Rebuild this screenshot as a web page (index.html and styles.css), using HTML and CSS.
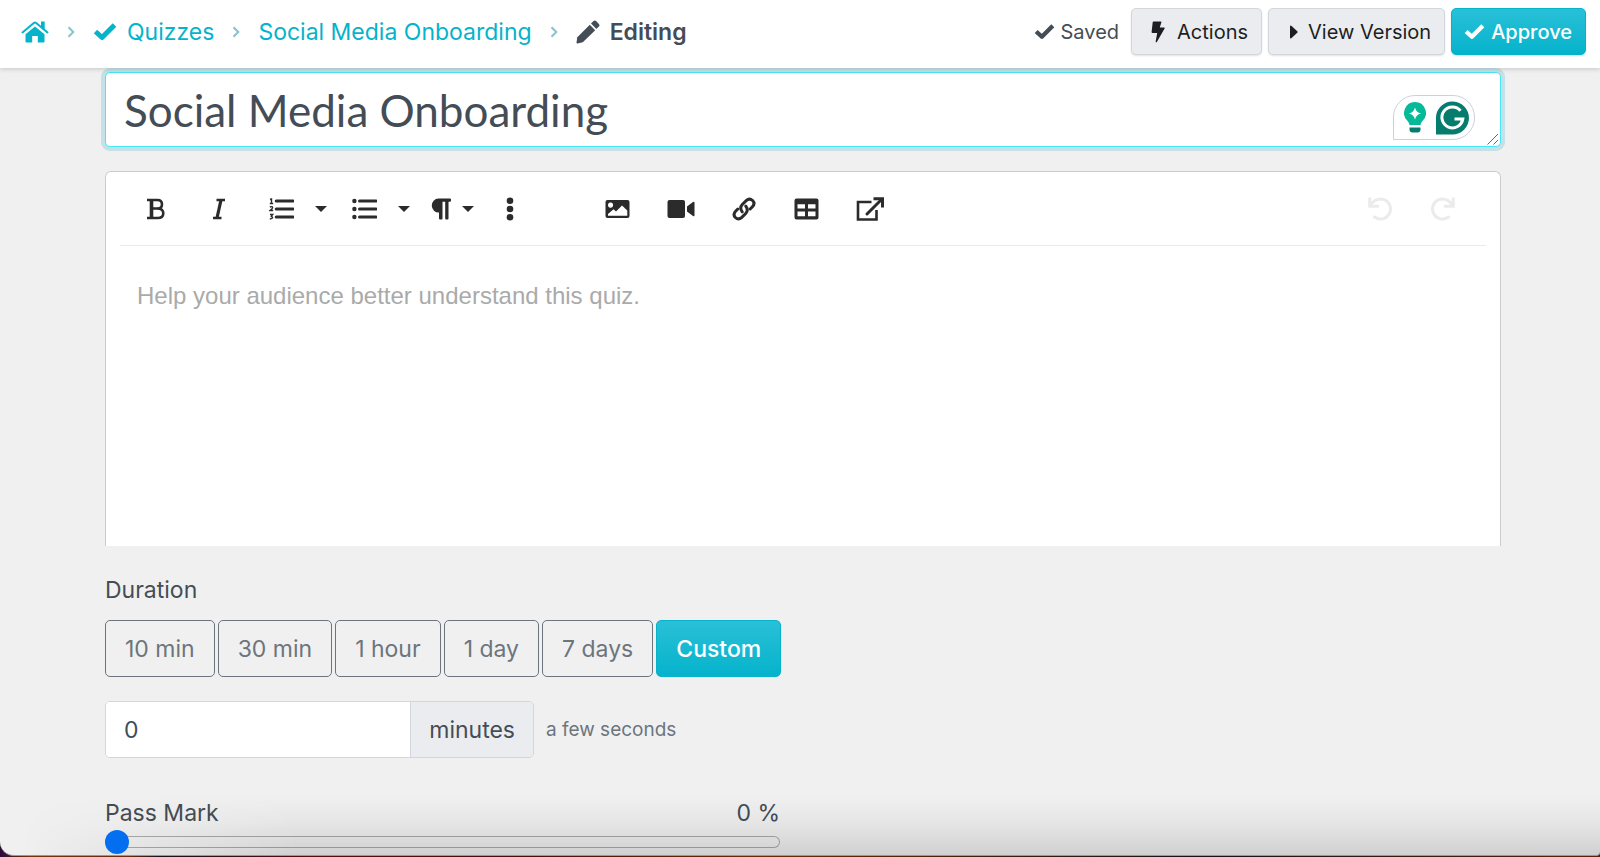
FILE: index.html
```html
<!DOCTYPE html>
<html lang="en">
<head>
  <meta charset="UTF-8" />
  <meta name="viewport" content="width=device-width, initial-scale=1" />
  <title>Social Media Onboarding - Editing</title>
  <link rel="stylesheet" href="styles.css">
</head>
<body>
  <div class="window">
    <header class="topbar">
      <nav class="breadcrumb" aria-label="Breadcrumb">
        <a href="#" class="home" aria-label="Home">
          <svg width="28" height="22" viewBox="0 0 28 22"><path d="M14 5.4 4.5 13.2V20.500q0 1 1 1h5.700v-6.500h5.600v6.500h5.700q1 0 1-1V13.200z" /><path class="line" d="M1.500 11.400 12.800 2q1.200-1 2.400 0L26.500 11.400" stroke-width="2" stroke-linecap="round" /><path d="M20 .5h3.700v8.500L20 6z" /></svg>
        </a>
        <svg class="line sep" width="8" height="12" viewBox="0 0 8 12"><path d="M1.500 1.200 6.300 6 1.500 10.800" /></svg>
        <a href="#">
          <svg class="line" width="24" height="19" viewBox="0 0 24 19"><path d="M2.500 9.500 9 15.500 21.500 3" stroke-width="5" stroke-linejoin="round" /></svg>
          Quizzes
        </a>
        <svg class="line sep" width="8" height="12" viewBox="0 0 8 12"><path d="M1.500 1.200 6.300 6 1.500 10.800" /></svg>
        <a href="#">Social Media Onboarding</a>
        <svg class="line sep" width="8" height="12" viewBox="0 0 8 12"><path d="M1.500 1.200 6.300 6 1.500 10.800" /></svg>
        <span class="current">
          <svg width="24" height="24" viewBox="0 0 24 24"><path d="M13.800 4.800 19.200 10.200 6.800 22.300 1.600 23.500Q.4 23.600.5 22.400L1.300 17.200z" /><path d="m15 3.600 2.500-2.500q1.300-1.200 2.600 0l2.800 2.800q1.200 1.300 0 2.600L20.400 9z" /></svg>
          Editing
        </span>
      </nav>
      <div class="actions">
        <span class="saved">
          <svg class="line" width="21" height="17" viewBox="0 0 24 19"><path d="M2.500 9.500 9 15.500 21.500 3" stroke-width="5" stroke-linejoin="round" /></svg>
          Saved
        </span>
        <button type="button" class="btn btn-light btn-actions">
          <svg width="14" height="22" viewBox="0 0 14 22"><path d="M2.500.5h7.300q.8 0 .6.800L8.800 6.600h4.300q1 0 .5.900L6 20.800q-1.400 1.500-1.300-.5L6.200 12H1.500Q.5 12 .6 11L1.700 1.300Q1.800.5 2.500.5z" /></svg>
          Actions
        </button>
        <button type="button" class="btn btn-light btn-version">
          <svg width="8" height="14" viewBox="0 0 8 14"><path d="M0 1.200Q.2 0 1.300.7L7.300 6.300Q8 7 7.300 7.700L1.300 13.300Q.2 14 0 12.800z" /></svg>
          View Version
        </button>
        <button type="button" class="btn btn-primary btn-approve">
          <svg class="line" width="21" height="17" viewBox="0 0 24 19"><path d="M2.500 9.500 9 15.500 21.500 3" stroke-width="5" stroke-linejoin="round" /></svg>
          Approve
        </button>
      </div>
    </header>

    <main class="content">
      <div class="title-field">
        <textarea class="title-input" rows="1" aria-label="Quiz title">Social Media Onboarding</textarea>
        <svg class="resize-grip" width="12" height="12" viewBox="0 0 12 12"><path d="M.5 11.500 11 1M6.500 11.500 11 7" /></svg>
        <div class="assistant">
          <svg width="22" height="31" viewBox="0 0 22 31"><path fill="#06b999" d="M11 0a11 11 0 0 1 7 19.400q-1.300 1.500-1.500 3.600h-11q-.2-2.100-1.500-3.600A11 11 0 0 1 11 0z" /><path fill="#fff" d="M11 5.500Q12.200 10.300 17 11.500 12.200 12.700 11 17.500 9.800 12.700 5 11.500 9.800 10.300 11 5.500z" /><path fill="#067c6e" d="M5.500 25.500h11v2q0 3-3 3h-5q-3 0-3-3z" /></svg>
          <svg width="33" height="35" viewBox="0 0 33 35"><path fill="#067c6e" d="M0 34.500V17A16.500 16.500 0 1 1 16.500 34.500z" /><path d="M24.500 10.700A10.500 10.500 0 1 0 26.800 19H18.500M26.800 19l-2 5" fill="none" stroke="#fff" stroke-width="3" /></svg>
        </div>
      </div>

      <section class="editor">
        <div class="toolbar">
          <button type="button" class="tool" aria-label="Bold">
            <svg class="line" width="20" height="22" viewBox="0 0 20 22"><path d="M1 2h10.500q4.500 0 4.500 4.300t-4.500 4.200H6M11 10.500q6.300 0 6.300 4.800T11.500 20H1" stroke-width="2.600" /><path d="M5.500 2v18" stroke-width="3.600" /></svg>
          </button>
          <button type="button" class="tool" aria-label="Italic">
            <svg class="line" width="14" height="22" viewBox="0 0 14 22"><path d="M4.500 2H13M1 20h8.500" stroke-width="2.400" /><path d="M9 2 5 20" stroke-width="3.200" /></svg>
          </button>
          <button type="button" class="tool" aria-label="Ordered list">
            <svg class="line" width="25" height="22" viewBox="0 0 25 22"><path d="M7.200 3H24M7.200 11H24M7.200 19H24" stroke-width="3" stroke-linecap="round" /><path d="M1 1.500 2.500 1v4.500M.8 5.500h3.400M.8 9q2.800-1 2.800.8 0 1-2.600 2.700h3.200M1 16.500h2.700L2.300 18.300q3.200 1.800-1.500 2.700" stroke-width="1.400" /></svg>
          </button>
          <button type="button" class="caret" aria-label="Ordered list styles"><svg width="12" height="6" viewBox="0 0 12 6"><path d="M0 0h12L6 6z" /></svg></button>
          <button type="button" class="tool" aria-label="Unordered list">
            <svg width="25" height="22" viewBox="0 0 25 22"><path d="M7.500 3H24M7.500 11H24M7.500 19H24" stroke="currentColor" stroke-width="3" stroke-linecap="round" /><circle cx="2.400" cy="3" r="2.200" /><circle cx="2.400" cy="11" r="2.200" /><circle cx="2.400" cy="19" r="2.200" /></svg>
          </button>
          <button type="button" class="caret" aria-label="Unordered list styles"><svg width="12" height="6" viewBox="0 0 12 6"><path d="M0 0h12L6 6z" /></svg></button>
          <button type="button" class="tool-format" aria-label="Paragraph format">
            <svg width="20" height="22" viewBox="0 0 20 22"><path d="M7.500.5H19q1 0 1 1v1.300q0 1-1 1h-1.500V20.500q0 1-1 1h-1.300q-1 0-1-1V3.800H11.500V20.500q0 1-1 1H9q-1 0-1-1V14.500A7 7 0 0 1 7.500.5z" /></svg>
            <svg width="12" height="6" viewBox="0 0 12 6"><path d="M0 0h12L6 6z" /></svg>
          </button>
          <button type="button" class="tool-more" aria-label="More text">
            <svg width="8" height="24" viewBox="0 0 8 24"><circle cx="4" cy="3.800" r="3.300" /><circle cx="4" cy="12" r="3.300" /><circle cx="4" cy="20.200" r="3.300" /></svg>
          </button>
          <button type="button" class="tool" aria-label="Insert image">
            <svg width="25" height="20" viewBox="0 0 25 20"><path fill-rule="evenodd" d="M2.500 1h20Q24.500 1 24.500 3v14q0 2-2 2h-20q-2 0-2-2V3q0-2 2-2zM5.500 3.500a2.600 2.600 0 1 0 .1 0zM3 16.800H22.300V11.500L17 6.500 11 12.500 8.500 10.200 3 15z" /></svg>
          </button>
          <button type="button" class="tool" aria-label="Insert video">
            <svg width="28" height="20" viewBox="0 0 28 20"><rect x=".5" y="1" width="17.500" height="18" rx="2" /><path d="M20 7.500 26 3q1.500-.8 1.500.8v12.400q0 1.600-1.500.8L20 12.500z" /></svg>
          </button>
          <button type="button" class="tool" aria-label="Insert link">
            <svg class="line" width="24" height="24" viewBox="0 0 24 24" stroke-width="3" stroke-linecap="round"><path d="M10.200 14.800Q7.200 10.700 10.300 7.500L14.200 3.600Q17.500.6 20.600 3.500 23.500 6.600 20.400 9.800L18.200 12" /><path d="M13.800 9.200Q16.800 13.300 13.700 16.500L9.800 20.400Q6.500 23.400 3.400 20.500.5 17.400 3.600 14.200L5.800 12" /></svg>
          </button>
          <button type="button" class="tool" aria-label="Insert table">
            <svg width="25" height="22" viewBox="0 0 25 22"><path fill-rule="evenodd" d="M2.500.5h20q2 0 2 2v17q0 2-2 2h-20q-2 0-2-2v-17q0-2 2-2zM3.500 6.200v4.300h7.500V6.200zM14 6.200v4.300h7.500V6.200zM3.500 13.500v4.800h7.500v-4.800zM14 13.500v4.800h7.500v-4.800z" /></svg>
          </button>
          <button type="button" class="tool" aria-label="Open in full view">
            <svg class="line" width="28" height="24" viewBox="0 0 28 24" stroke-width="3"><path d="M15.500 5H2v17.500h18.500V13" stroke-width="2.600" /><path d="M11 17 25.500 2.500" stroke-linecap="round" /><path d="M17.500 1.800h9v8.700" /></svg>
          </button>
          <div class="history">
            <button type="button" class="tool" disabled aria-label="Undo">
              <svg class="line" width="24" height="24" viewBox="0 0 24 24" stroke-width="3"><path d="M2.500 8.500Q6 2 13 2A10 10 0 1 1 6.500 20" stroke-linecap="round" /><path d="M1.700.5v8.700H11" /></svg>
            </button>
            <button type="button" class="tool" disabled aria-label="Redo">
              <svg class="line" width="24" height="24" viewBox="0 0 24 24" stroke-width="3"><path d="M21.500 8.500Q18 2 11 2A10 10 0 1 0 17.500 20" stroke-linecap="round" /><path d="M22.300.5v8.700H13" /></svg>
            </button>
          </div>
        </div>
        <textarea class="description" placeholder="Help your audience better understand this quiz." aria-label="Quiz description"></textarea>
      </section>

      <section class="settings">
        <span class="label" id="durationLabel">Duration</span>
        <div class="durations" role="group" aria-labelledby="durationLabel">
          <button type="button" class="duration">10 min</button>
          <button type="button" class="duration">30 min</button>
          <button type="button" class="duration">1 hour</button>
          <button type="button" class="duration">1 day</button>
          <button type="button" class="duration">7 days</button>
          <button type="button" class="duration btn-primary">Custom</button>
        </div>

        <div class="custom-duration">
          <div class="input-group">
            <input type="text" id="minutes" inputmode="numeric" value="0" />
            <label for="minutes">minutes</label>
          </div>
          <span class="hint">a few seconds</span>
        </div>

        <div class="pass-head">
          <label class="label" for="passMark">Pass Mark</label>
          <output for="passMark">0 %</output>
        </div>
        <input type="range" id="passMark" min="0" max="100" value="0" />
      </section>
    </main>
  </div>
</body>
</html>
```

FILE: styles.css
```css
* {
  box-sizing: border-box;
}
body {
  margin: 0;
  background: linear-gradient(90deg, #2a0a3a 0, #7a3010 30px, #6b2a12 8%, #1a1016 10%, #5a0a10 20%, #4a0a10 32%, #6b2a08 48%, #1a1016 75%, #5a2010 100%);
  color: #444d56;
  font-family: Inter, "Liberation Sans", sans-serif;
  font-size: 23px;
  line-height: 32px;
}
button, input, textarea {
  font: inherit;
  color: inherit;
}
button {
  cursor: pointer;
}
svg {
  display: block;
  flex: none;
  fill: currentColor;
}
.line {
  fill: none;
  stroke: currentColor;
}

.window {
  position: relative;
  height: calc(100vh - 1px);
  overflow: hidden;
  background: #f0f0f0;
  border-bottom: 1px solid #999;
  border-radius: 0 0 4px 14px;
}
/* shade along the bottom edge of the window */
.window::after {
  content: "";
  position: absolute;
  left: 0;
  right: 0;
  bottom: 0;
  height: 60px;
  background: linear-gradient(rgba(0, 0, 0, 0), rgba(0, 0, 0, 0.04) 45%, rgba(0, 0, 0, 0.13));
  -webkit-mask-image: linear-gradient(90deg, transparent 20px, #000 300px);
  mask-image: linear-gradient(90deg, transparent 20px, #000 300px);
  pointer-events: none;
}

/* top bar */
.topbar {
  position: relative;
  z-index: 1;
  display: flex;
  align-items: center;
  justify-content: space-between;
  height: 68px;
  padding: 0 14px 5px 21px;
  background: #fff;
  box-shadow: 0 1px 5px rgba(0, 0, 0, 0.18);
}
.breadcrumb {
  display: flex;
  align-items: center;
  gap: 18px;
}
.breadcrumb a,
.breadcrumb .current {
  display: flex;
  align-items: center;
  gap: 10px;
  color: #05b3cb;
  text-decoration: none;
}
.breadcrumb .current {
  color: #444d56;
  font-weight: 600;
}
.sep {
  stroke: #85c3cd;
  stroke-width: 2;
}
.actions {
  display: flex;
  align-items: center;
  gap: 6px;
  font-size: 20px;
}
.saved {
  display: flex;
  align-items: center;
  gap: 6px;
  margin-right: 6px;
}
.btn {
  display: flex;
  align-items: center;
  height: 47px;
  border: 1px solid #d1d7dc;
  border-radius: 5px;
  box-shadow: 0 1px 2px rgba(0, 0, 0, 0.12);
}
.btn-light {
  background: #ebecef;
  color: #1b1f23;
}
.btn-actions {
  gap: 12px;
  padding: 0 13px 0 19px;
}
.btn-version {
  gap: 10px;
  padding: 0 13px 0 21px;
}
.btn-approve {
  gap: 6px;
  padding: 0 13px 0 12px;
  font-weight: 500;
}
.btn-primary {
  border-color: #05b3cb;
  background: linear-gradient(#29c0d8, #05b3cb);
  color: #fff;
}

.content {
  padding: 4px 99px 0 105px;
}

/* title */
.title-field {
  position: relative;
}
.title-input {
  display: block;
  width: 100%;
  height: 75px;
  padding: 9px 18px;
  border: 1px solid #45e6fb;
  border-radius: 5px;
  outline: 0;
  background: #fff;
  box-shadow: 0 0 0 4px #c3e1e6;
  font-family: Lato, sans-serif;
  font-size: 44px;
  line-height: 56px;
  resize: none;
  overflow: hidden;
}
.resize-grip {
  position: absolute;
  right: 2px;
  bottom: 2px;
  stroke: #666;
  stroke-width: 1;
}
.assistant {
  position: absolute;
  right: 26px;
  bottom: 7px;
  display: flex;
  align-items: center;
  gap: 10px;
  height: 45px;
  padding: 0 5px 0 10px;
  border: 1px solid #cfcfe0;
  border-radius: 22px 22px 22px 0;
  background: #fff;
}

/* editor */
.editor {
  margin-top: 24px;
  padding: 0 14px;
  border: 1px solid #ccc;
  border-bottom: 0;
  border-radius: 6px 6px 0 0;
  background: #fff;
}
.toolbar {
  display: flex;
  align-items: center;
  height: 74px;
  padding: 0 12px 0 4px;
  border-bottom: 1px solid #ebebeb;
  color: #2b2b2b;
}
.toolbar button {
  display: flex;
  align-items: center;
  justify-content: center;
  height: 48px;
  padding: 0;
  border: 0;
  background: none;
}
.tool {
  width: 63px;
}
.toolbar .caret {
  width: 16px;
  margin-right: 4px;
}
.toolbar .tool-format {
  gap: 11px;
  width: 72px;
}
.toolbar .tool-more {
  width: 44px;
  margin-right: 54px;
}
.history {
  display: flex;
  margin-left: auto;
}
.toolbar button:disabled {
  color: #ebebeb;
}
.description {
  display: block;
  width: 100%;
  height: 300px;
  padding: 34px 17px;
  border: 0;
  outline: 0;
  background: none;
  font-family: "Liberation Sans", Arial, sans-serif;
  font-size: 24px;
  resize: none;
}
.description::placeholder {
  color: #aaa;
}

/* settings */
.settings {
  width: 675px;
  padding-top: 28px;
}
.label {
  display: block;
}
.durations {
  display: flex;
  gap: 3px;
  margin-top: 14px;
}
.duration {
  height: 57px;
  padding: 0 19px;
  border: 1px solid #6c757d;
  border-radius: 5px;
  background: none;
  color: #6c757d;
  white-space: nowrap;
}
.duration.btn-primary {
  border-color: #05b3cb;
  background: linear-gradient(#29c0d8, #05b3cb);
  color: #fff;
  font-weight: 500;
}
.custom-duration {
  display: flex;
  align-items: center;
  gap: 12px;
  margin-top: 24px;
}
.input-group {
  display: flex;
  width: 429px;
  height: 57px;
  border: 1px solid #d1d7dc;
  border-radius: 5px;
  overflow: hidden;
}
.input-group input {
  flex: 1;
  min-width: 0;
  padding: 0 18px;
  border: 0;
  outline: 0;
  background: #fff;
}
.input-group label {
  display: flex;
  align-items: center;
  padding: 0 18px;
  border-left: 1px solid #d1d7dc;
  background: #ebecef;
}
.hint {
  color: #6c757d;
  font-size: 19px;
}
.pass-head {
  display: flex;
  justify-content: space-between;
  margin-top: 39px;
}
#passMark {
  display: block;
  width: 100%;
  height: 24px;
  margin: 1px 0 0;
  background: none;
  -webkit-appearance: none;
  appearance: none;
}
#passMark::-webkit-slider-runnable-track {
  height: 12px;
  border-radius: 6px;
  box-shadow: inset 0 0 0 1px #aaa;
}
#passMark::-webkit-slider-thumb {
  -webkit-appearance: none;
  width: 24px;
  height: 24px;
  margin-top: -6px;
  border-radius: 50%;
  background: #0473f8;
}
```
